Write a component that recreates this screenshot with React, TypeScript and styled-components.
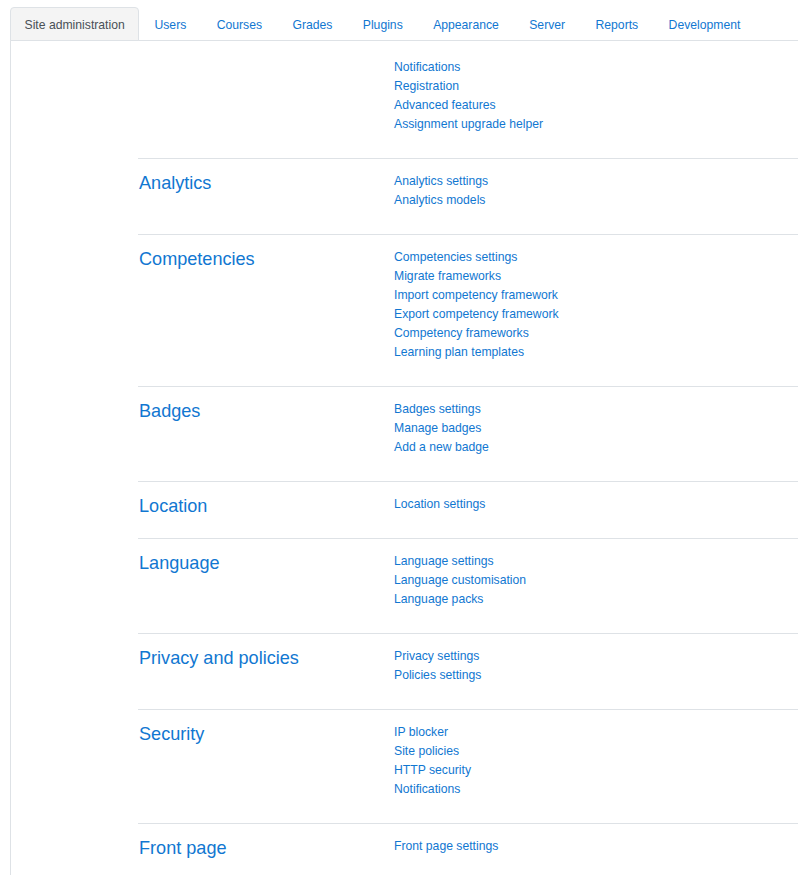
import React from 'react';
import styled, { createGlobalStyle } from 'styled-components';

const GlobalStyle = createGlobalStyle`
  html, body {
    margin: 0;
    padding: 0;
    overflow: hidden;
    background: #fff;
  }
  body {
    font-family: "Liberation Sans", Arial, sans-serif;
    font-size: 12.19px;
    color: #373a3c;
  }
`;

const Page = styled.div`
  padding: 7px 0 0 10px;
`;

const TabList = styled.ul`
  display: flex;
  list-style: none;
  margin: 0;
  padding: 0;
  border-bottom: 1px solid #dee2e6;
`;

const Tab = styled.li<{ $active?: boolean }>`
  margin-bottom: -1px;
  padding: 8px ${(p) => (p.$active ? '13.5px' : '14.2px')} 6px;
  line-height: 18px;
  border: 1px solid ${(p) => (p.$active ? '#dee2e6' : 'transparent')};
  border-bottom-color: #dee2e6;
  border-radius: 4px 4px 0 0;
  background: ${(p) => (p.$active ? '#f4f4f4' : 'transparent')};
  color: ${(p) => (p.$active ? '#495057' : '#1177d1')};
  white-space: nowrap;
  cursor: pointer;
`;

const Pane = styled.div`
  border-left: 1px solid #dee2e6;
  padding: 3px 0 0 127px;
  min-height: 860px;
`;

const Row = styled.div<{ $first?: boolean }>`
  display: grid;
  grid-template-columns: 256px 1fr;
  border-top: 1px solid ${(p) => (p.$first ? 'transparent' : '#dee2e6')};
  padding: 13px 0 11px;
`;

const Heading = styled.h3`
  margin: 0;
  padding: 1px 0 0 1px;
  font-size: 18.1px;
  font-weight: 400;
  line-height: 1.2;
  color: #1177d1;
`;

const LinkList = styled.ul`
  list-style: none;
  margin: 0 0 13px;
  padding: 0;
`;

const Item = styled.li`
  line-height: 19px;

  a {
    color: #1177d1;
    text-decoration: none;

    &:hover {
      text-decoration: underline;
    }
  }
`;

const tabs = [
  'Site administration',
  'Users',
  'Courses',
  'Grades',
  'Plugins',
  'Appearance',
  'Server',
  'Reports',
  'Development',
];

const sections: { title: string; links: string[] }[] = [
  {
    title: '',
    links: ['Notifications', 'Registration', 'Advanced features', 'Assignment upgrade helper'],
  },
  { title: 'Analytics', links: ['Analytics settings', 'Analytics models'] },
  {
    title: 'Competencies',
    links: [
      'Competencies settings',
      'Migrate frameworks',
      'Import competency framework',
      'Export competency framework',
      'Competency frameworks',
      'Learning plan templates',
    ],
  },
  { title: 'Badges', links: ['Badges settings', 'Manage badges', 'Add a new badge'] },
  { title: 'Location', links: ['Location settings'] },
  {
    title: 'Language',
    links: ['Language settings', 'Language customisation', 'Language packs'],
  },
  { title: 'Privacy and policies', links: ['Privacy settings', 'Policies settings'] },
  {
    title: 'Security',
    links: ['IP blocker', 'Site policies', 'HTTP security', 'Notifications'],
  },
  { title: 'Front page', links: ['Front page settings'] },
];

const App: React.FC = () => {
  return (
    <Page>
      <GlobalStyle />
      <TabList>
        {tabs.map((t, i) => (
          <Tab key={t} $active={i === 0}>
            {t}
          </Tab>
        ))}
      </TabList>
      <Pane>
        {sections.map((s, i) => (
          <Row key={i} $first={i === 0}>
            <div>{s.title && <Heading>{s.title}</Heading>}</div>
            <LinkList>
              {s.links.map((l) => (
                <Item key={l}>
                  <a href="#">{l}</a>
                </Item>
              ))}
            </LinkList>
          </Row>
        ))}
      </Pane>
    </Page>
  );
};

export default App;
